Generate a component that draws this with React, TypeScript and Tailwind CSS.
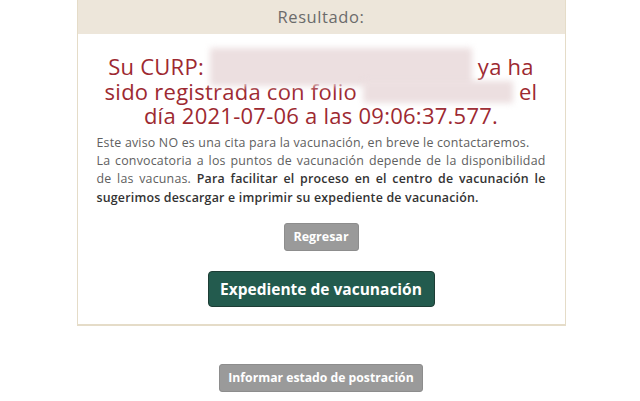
import React from "react";

function Redacted({ width, height }: { width: number; height: number }) {
  // blurred redaction over a personal data field
  return (
    <span className="relative inline-block align-middle" style={{ width, height: 18 }}>
      <span
        className="absolute left-0 right-0 bg-[#ecdfe0] blur-[3px]"
        style={{ top: 7 - height / 2, height }}
      />
    </span>
  );
}

export default function App() {
  return (
    <div className="min-h-[401px] bg-white font-['Open_Sans',sans-serif]">
      <div className="flex flex-col items-center">
        <div className="w-[489px] ml-[2px] border border-t-0 border-b-2 border-[#e5dcc8]">
          <div className="h-[34px] bg-[#ede6da] flex items-center justify-center">
            <span className="text-[16.5px] tracking-[0.6px] text-[#6b6b6b]">Resultado:</span>
          </div>

          <div className="px-[19px] pt-[20px] pb-[17px]">
            <h2 className="text-center text-[22px] leading-[24.5px] text-[#9d2931] tracking-[0.25px]">
              Su CURP: <Redacted width={262} height={38} /> ya ha
              <br />
              sido registrada con folio <Redacted width={150} height={22} /> el
              <br />
              día 2021-07-06 a las 09:06:37.577.
            </h2>

            <p className="mt-[6px] text-[12.4px] leading-[18.4px] tracking-[0.2px] text-[#606060] text-justify">
              Este aviso NO es una cita para la vacunación, en breve le contactaremos.
              <br />
              La convocatoria a los puntos de vacunación depende de la disponibilidad de las vacunas.{" "}
              <span className="font-semibold text-[#333333]">
                Para facilitar el proceso en el centro de vacunación le sugerimos descargar e imprimir su expediente de
                vacunación.
              </span>
            </p>

            <div className="mt-[16px] flex flex-col items-center gap-[20px]">
              <button className="h-[28px] w-[75px] rounded-[3px] bg-[#9a9a9a] border border-[#8d8d8d] text-white text-[12.5px] font-bold">
                Regresar
              </button>
              <button className="h-[36px] w-[227px] rounded-[4px] bg-[#235b4e] border border-[#1d3d35] text-white text-[15.5px] font-bold">
                Expediente de vacunación
              </button>
            </div>
          </div>
        </div>

        <button className="mt-[38px] ml-[2px] h-[28px] w-[204px] rounded-[3px] bg-[#9a9a9a] border border-[#8d8d8d] text-white text-[12.2px] font-bold">
          Informar estado de postración
        </button>
      </div>
    </div>
  );
}
